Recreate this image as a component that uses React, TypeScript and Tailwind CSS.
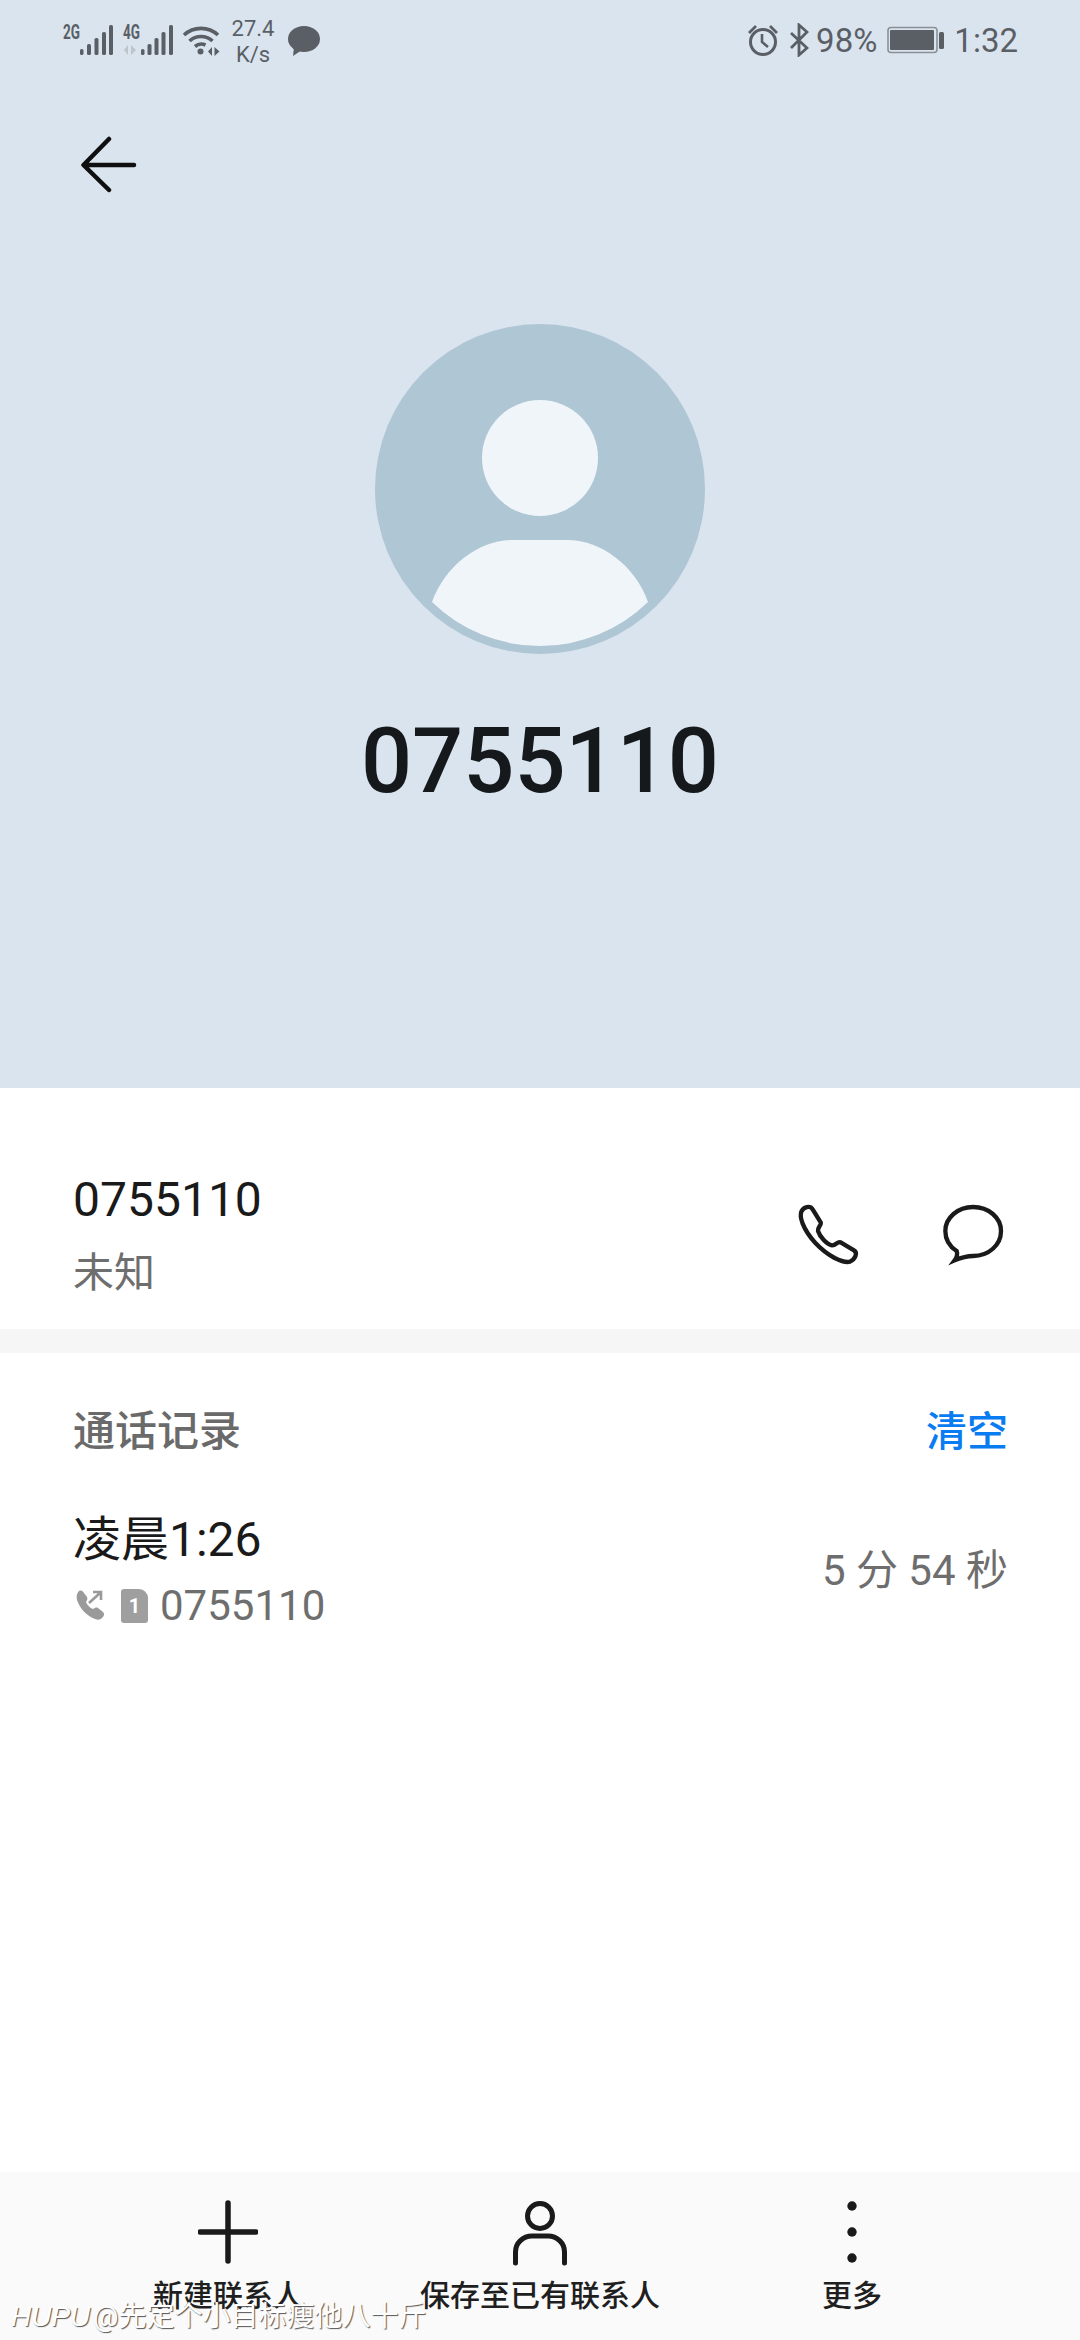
import React from "react";

const FONT = "font-['Roboto','Noto_Sans_CJK_SC',sans-serif]";

function Bars({ xs }: { xs: number[] }) {
  const tops = [49, 44, 38, 32, 25];
  return (
    <>
      {xs.map((x, i) => (
        <rect key={x} x={x} y={tops[i]} width={i === 0 ? 3.5 : 4} height={55 - tops[i]} rx={1.6} fill="#5a5f66" />
      ))}
    </>
  );
}

function NetworkIcons() {
  return (
    <svg width="160" height="60" viewBox="62 0 160 60" className="block">
      <text x="63" y="38.500" textLength="17" lengthAdjust="spacingAndGlyphs" fontFamily="Roboto" fontWeight="700" fontSize="20" fill="#5a5f66">2G</text>
      <Bars xs={[80, 87, 94.500, 102, 109]} />
      <text x="123" y="38.500" textLength="17" lengthAdjust="spacingAndGlyphs" fontFamily="Roboto" fontWeight="700" fontSize="20" fill="#5a5f66">4G</text>
      <path d="M128 45v10l-4-5zM131 45v10l5-5z" fill="#bfc4c9" />
      <Bars xs={[141, 147.500, 154.500, 161.500, 169]} />
      <g fill="none" stroke="#5a5f66" strokeWidth="3.600">
        <path d="M184 35a25 25 0 0 1 34 0" />
        <path d="M189.500 41a17 17 0 0 1 23 0" />
        <path d="M195 46.500a10 10 0 0 1 10.500 -1.500" />
      </g>
      <circle cx="200.500" cy="51.500" r="3" fill="#5a5f66" />
      <path d="M212 47v9l-4-4.500zM214.500 47v9l5-4.500z" fill="#5a5f66" />
    </svg>
  );
}

function Bubble() {
  return (
    <svg width="34" height="32" viewBox="287 26 34 32" className="block">
      <ellipse cx="304" cy="39" rx="16" ry="13" fill="#5a5f66" />
      <path d="M294 47l-1 9 9-6z" fill="#5a5f66" />
    </svg>
  );
}

function Alarm() {
  return (
    <svg width="32" height="32" viewBox="746 24 32 32" className="block">
      <circle cx="762" cy="42" r="12.500" fill="none" stroke="#5a5f66" strokeWidth="3" />
      <path d="M761 34v8l6 5" fill="none" stroke="#5a5f66" strokeWidth="2.600" />
      <path d="M748 33l7-7M776 33l-7-7" fill="none" stroke="#5a5f66" strokeWidth="2.800" />
    </svg>
  );
}

function Bluetooth() {
  return (
    <svg width="20" height="34" viewBox="788 23 20 34" className="block">
      <path d="M790 33l16 15-8 7V25l8 7-16 16" fill="none" stroke="#5a5f66" strokeWidth="2.800" />
    </svg>
  );
}

function Battery() {
  return (
    <svg width="58" height="28" viewBox="887 26 58 28" className="block">
      <rect x="888" y="27.500" width="49" height="25" rx="3" fill="none" stroke="#8b9096" strokeWidth="1.600" />
      <rect x="890" y="30" width="44" height="20" rx="1" fill="#5a5f66" />
      <rect x="939" y="32" width="5" height="17" rx="1.500" fill="#5a5f66" />
    </svg>
  );
}

function Avatar() {
  return (
    <svg width="330" height="330" viewBox="375 324 330 330" className="block">
      <circle cx="540" cy="489" r="165" fill="#afc6d5" />
      <circle cx="540" cy="458" r="58" fill="#eff5f8" />
      <path d="M432 602C445 565 480 540 512 540H568C600 540 635 565 648 602A154.500 154.500 0 0 1 432 602Z" fill="#eff5f8" />
    </svg>
  );
}

function BackArrow() {
  return (
    <svg width="56" height="60" viewBox="80 135 56 60" className="block" fill="none" stroke="#0f0f0f" strokeWidth="4.500" strokeLinecap="round" strokeLinejoin="round">
      <path d="M108 139L82.500 165L108 190M83 165H133" />
    </svg>
  );
}

function PhoneIcon() {
  return (
    <svg width="70" height="68" viewBox="100 115 210 204" className="block" fill="none" stroke="#1a1a1a" strokeWidth="13" strokeLinejoin="round">
      <path d="M122 150C128 136 148 130 156 143L180 182C184 190 170 196 172 208C178 226 198 248 214 251C226 252 230 238 240 242L280 266C292 274 284 292 268 300C254 304 240 298 222 289C180 266 142 226 126 186C120 170 118 160 122 150Z" />
    </svg>
  );
}

function ChatIcon() {
  return (
    <svg width="70" height="68" viewBox="530 115 210 204" className="block" fill="none" stroke="#1a1a1a" strokeWidth="13" strokeLinejoin="miter">
      <path d="M586 268C564 254 552 232 552 208C552 168 590 136 635 136C682 136 719 168 719 208C719 250 682 283 635 283C618 283 604 286 580 296C586 288 590 280 586 268Z" />
    </svg>
  );
}

function CallOut() {
  return (
    <svg width="32" height="32" viewBox="74 1587 32 32" className="block" fill="#9a9a9a">
      <path d="M80 1588c2-1 4 0 5 2l3 4c1 2 0 3-1 5 1 3 4 6 7 7 2-1 3-2 5-1l5 4c2 2 1 4-1 6-2 2-4 2-7 1-8-3-15-10-18-19-1-4 0-7 2-9z" />
      <path d="M90 1600l11-10M94 1589h8v8" fill="none" stroke="#9a9a9a" strokeWidth="2.600" />
    </svg>
  );
}

function SimBadge() {
  return (
    <div className="relative w-[27px] h-[34px] mr-[12px] bg-[#9f9f9f] rounded-[3px] rounded-tr-[9px] flex items-center justify-center text-white text-[20px] leading-none font-bold">
      1
    </div>
  );
}

function PlusIcon() {
  return (
    <svg width="60" height="64" viewBox="0 0 60 64" className="block" fill="none" stroke="#1a1a1a" strokeWidth="5.500" strokeLinecap="round">
      <path d="M2 32H58M30 3V61" />
    </svg>
  );
}

function PersonIcon() {
  return (
    <svg width="60" height="68" viewBox="0 0 60 68" className="block" fill="none" stroke="#1a1a1a" strokeWidth="5" strokeLinecap="round">
      <circle cx="30" cy="18" r="12.500" />
      <path d="M5.500 65V54C5.500 45 13 38 22 38H38C47 38 54.500 45 54.500 54V65" />
    </svg>
  );
}

function DotsIcon() {
  return (
    <svg width="60" height="64" viewBox="0 0 60 64" className="block" fill="#1a1a1a">
      <circle cx="30" cy="6" r="4.700" />
      <circle cx="30" cy="32" r="4.700" />
      <circle cx="30" cy="58" r="4.700" />
    </svg>
  );
}

function BarItem({ icon, label }: { icon: React.ReactNode; label: string }) {
  return (
    <div className="flex-1 flex flex-col items-center">
      <div className="h-[68px] flex items-center justify-center">{icon}</div>
      <div className="mt-[10px] text-[30px] leading-[40px] font-medium text-[#1f1f1f] whitespace-nowrap">{label}</div>
    </div>
  );
}

export default function App() {
  return (
    <div className={`relative w-[1080px] h-[2340px] overflow-hidden flex flex-col bg-white ${FONT}`}>
      <header className="h-[1088px] shrink-0 bg-[#dae4ee] flex flex-col">
        <div className="h-[80px] pl-[62px] pr-[62px] flex items-center justify-between text-[#5a5f66]">
          <div className="self-start flex items-start">
            <NetworkIcons />
            <div className="pt-[16px] w-[62px] text-center text-[22px] leading-[26px]">
              <div>27.4</div>
              <div>K/s</div>
            </div>
            <div className="ml-[3px] pt-[26px]"><Bubble /></div>
          </div>
          <div className="flex items-center text-[33px] leading-none">
            <Alarm />
            <div className="ml-[10px]"><Bluetooth /></div>
            <span className="ml-[7px]">98%</span>
            <div className="ml-[10px]"><Battery /></div>
            <span className="ml-[9px]">1:32</span>
          </div>
        </div>
        <div className="h-[170px] pl-[81px] flex items-center">
          <BackArrow />
        </div>
        <div className="mt-[74px] flex justify-center">
          <Avatar />
        </div>
        <div className="mt-[62px] text-center text-[90px] leading-[92px] font-medium text-[#16191c]">0755110</div>
      </header>

      <section className="h-[241px] shrink-0 pt-[51px] pl-[73px] pr-[72px] flex items-center justify-between">
        <div className="flex flex-col">
          <div className="text-[48px] leading-[60px] text-[#1a1a1a]">0755110</div>
          <div className="mt-[18px] text-[41px] leading-[50px] text-[#6e6e6e]">未知</div>
        </div>
        <div className="flex items-center gap-[74px]">
          <PhoneIcon />
          <ChatIcon />
        </div>
      </section>

      <div className="h-[24px] shrink-0 bg-[#f6f6f6]" />

      <section className="flex-1 pl-[73px] pr-[72px]">
        <div className="mt-[54px] h-[50px] flex items-center justify-between">
          <div className="text-[42px] leading-[50px] font-medium text-[#6a6a6a]">通话记录</div>
          <div className="text-[41px] leading-[50px] font-medium text-[#0a7cf2]">清空</div>
        </div>
        <div className="mt-[53px] flex items-center justify-between">
          <div className="flex flex-col">
            <div className="text-[48px] leading-[60px] text-[#1a1a1a]">凌晨1:26</div>
            <div className="mt-[14px] h-[44px] flex items-center">
              <div className="mr-[16px]"><CallOut /></div>
              <SimBadge />
              <div className="text-[42px] leading-[44px] text-[#6e6e6e]">0755110</div>
            </div>
          </div>
          <div className="pt-[3px] text-[42px] leading-[50px] text-[#6e6e6e]">5 分 54 秒</div>
        </div>
      </section>

      <footer className="h-[168px] shrink-0 bg-[#fafafa] px-[72px] pt-[26px] flex">
        <BarItem icon={<PlusIcon />} label="新建联系人" />
        <BarItem icon={<PersonIcon />} label="保存至已有联系人" />
        <BarItem icon={<DotsIcon />} label="更多" />
      </footer>

      <div className="absolute left-[11px] top-[2298px] text-[28px] leading-[38px] text-white [text-shadow:1px_1px_1px_#555] whitespace-nowrap">
        <span className="italic font-['Liberation_Sans',sans-serif]">HUPU</span>
        <span className="ml-[3px]">@先定个小目标瘦他八十斤</span>
      </div>
    </div>
  );
}
